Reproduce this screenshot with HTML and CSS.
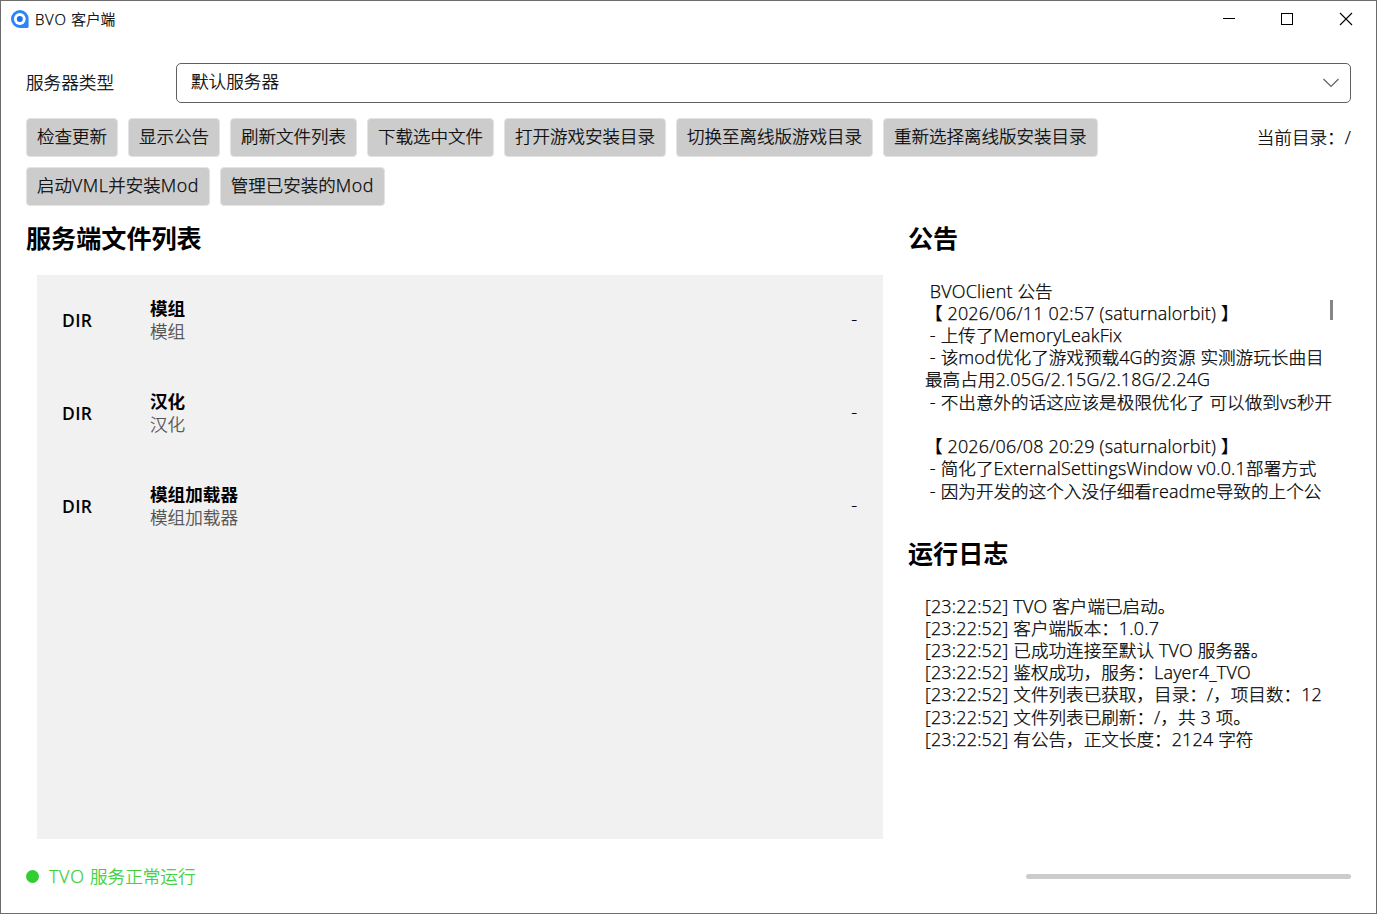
FILE: index.html
```html
<!DOCTYPE html>
<html lang="zh-CN">
<head>
<meta charset="utf-8">
<title>BVO 客户端</title>
<link rel="stylesheet" href="styles.css">
</head>
<body>
<div class="window">
  <header class="titlebar">
    <svg class="logo" width="20" height="20" viewBox="0 0 20 20">
      <path d="M10 1a9 9 0 1 0 0 18h7a1.600 1.600 0 0 0 1.600-1.600V10A8.800 8.800 0 0 0 10 1z" fill="#2e82fa"/>
      <circle cx="9.800" cy="10" r="5.900" fill="#fff"/>
      <circle cx="9.800" cy="10" r="3" fill="#1a70ee"/>
    </svg>
    <span class="caption"><span class="en">BVO </span>客户端</span>
    <div class="controls">
      <svg width="58" height="36" viewBox="0 0 58 36"><path d="M23 17.500h12" stroke="#000"/></svg>
      <svg width="59" height="36" viewBox="0 0 59 36"><rect x="23.500" y="12.500" width="11" height="11" fill="none" stroke="#000"/></svg>
      <svg width="59" height="36" viewBox="0 0 59 36"><path d="M23 12l12 12M35 12L23 24" stroke="#000" stroke-width="1.100"/></svg>
    </div>
  </header>
  <main class="content">
    <div class="server">
      <label>服务器类型</label>
      <div class="select"><span>默认服务器</span>
        <svg width="18" height="10" viewBox="0 0 18 10"><path d="M1.500 1L9 8.500L16.500 1" fill="none" stroke="#606060" stroke-width="1.200"/></svg>
      </div>
    </div>
    <div class="toolbar">
      <div class="buttons">
        <button>检查更新</button><button>显示公告</button><button>刷新文件列表</button><button>下载选中文件</button><button>打开游戏安装目录</button><button>切换至离线版游戏目录</button><button>重新选择离线版安装目录</button>
        <button>启动<span class="en">VML</span>并安装<span class="en">Mod</span></button><button>管理已安装的<span class="en">Mod</span></button>
      </div>
      <div class="cwd">当前目录：<span class="en">/</span></div>
    </div>
    <div class="columns">
      <section class="files">
        <h2>服务端文件列表</h2>
        <div class="list">
          <div class="row"><b class="kind">DIR</b><div class="names"><b>模组</b><span>模组</span></div><span class="size">-</span></div>
          <div class="row"><b class="kind">DIR</b><div class="names"><b>汉化</b><span>汉化</span></div><span class="size">-</span></div>
          <div class="row"><b class="kind">DIR</b><div class="names"><b>模组加载器</b><span>模组加载器</span></div><span class="size">-</span></div>
        </div>
      </section>
      <section class="side">
        <h2>公告</h2>
        <div class="notice">
          <div class="lines">
            <p><span class="en"> BVOClient </span>公告</p>
            <p><i>【</i><span class="en"> 2026/06/11 02:57 (saturnalorbit) </span><i>】</i></p>
            <p><span class="en"> - </span>上传了<span class="en">MemoryLeakFix</span></p>
            <p><span class="en"> - </span>该<span class="en">mod</span>优化了游戏预载<span class="en">4G</span>的资源<span class="en"> </span>实测游玩长曲目</p>
            <p>最高占用<span class="en">2.05G/2.15G/2.18G/2.24G</span></p>
            <p><span class="en"> - </span>不出意外的话这应该是极限优化了<span class="en"> </span>可以做到<span class="en">vs</span>秒开</p>
            <p></p>
            <p><i>【</i><span class="en"> 2026/06/08 20:29 (saturnalorbit) </span><i>】</i></p>
            <p><span class="en"> - </span>简化了<span class="en">ExternalSettingsWindow v0.0.1</span>部署方式</p>
            <p><span class="en"> - </span>因为开发的这个入没仔细看<span class="en">readme</span>导致的上个公</p>
          </div>
          <div class="thumb"></div>
        </div>
        <h2>运行日志</h2>
        <div class="lines log">
          <p><span class="en">[23:22:52] TVO </span>客户端已启动。</p>
          <p><span class="en">[23:22:52] </span>客户端版本：<span class="en">1.0.7</span></p>
          <p><span class="en">[23:22:52] </span>已成功连接至默认<span class="en"> TVO </span>服务器。</p>
          <p><span class="en">[23:22:52] </span>鉴权成功，服务：<span class="en">Layer4_TVO</span></p>
          <p><span class="en">[23:22:52] </span>文件列表已获取，目录：<span class="en">/</span>，项目数：<span class="en">12</span></p>
          <p><span class="en">[23:22:52] </span>文件列表已刷新：<span class="en">/</span>，共<span class="en"> 3 </span>项。</p>
          <p><span class="en">[23:22:52] </span>有公告，正文长度：<span class="en">2124 </span>字符</p>
        </div>
      </section>
    </div>
    <footer class="status">
      <span class="dot"></span><span><span class="en">TVO </span>服务正常运行</span>
      <div class="progress"></div>
    </footer>
  </main>
</div>
</body>
</html>
```
FILE: styles.css
```css
* { box-sizing: border-box; margin: 0; }
body {
  font-family: "Noto Sans CJK SC", sans-serif;
  font-size: 17.6px;
  font-weight: 300;
  line-height: 22.22px;
  color: #000;
  background: #fff;
  -webkit-text-stroke: .25px;
}
.window {
  width: 1377px;
  height: 914px;
  border: 1px solid #6e6c6d;
  display: flex;
  flex-direction: column;
  overflow: hidden;
}
.en {
  font-family: "Open Sans", "Noto Sans", sans-serif;
  font-size: 1.02em;
  font-weight: 300;
  letter-spacing: .2px;
  line-height: 1;
  white-space: pre;
}
.titlebar { height: 37px; flex: none; display: flex; align-items: center; padding: 0 0 1px 9px; }
.caption { font-size: 14.7px; margin-left: 5px; white-space: nowrap; }
.caption .en, .status .en { letter-spacing: .7px; }
button .en { letter-spacing: .5px; }
.controls { display: flex; margin-left: auto; }
.titlebar svg { display: block; }
.content { flex: 1; padding: 25px 25px 0; display: flex; flex-direction: column; }
.server { display: flex; align-items: center; height: 40px; }
.server label { width: 150px; padding-bottom: 2px; }
.select {
  flex: 1;
  height: 40px;
  border: 1px solid #606060;
  border-radius: 5px;
  display: flex;
  align-items: center;
  justify-content: space-between;
  padding: 0 10px 0 14px;
}
.select span { padding-bottom: 4px; }
.toolbar { display: flex; justify-content: space-between; margin-top: 15px; }
.buttons { width: 1090px; display: flex; flex-wrap: wrap; gap: 10px; }
button {
  font: inherit;
  font-size: 17.5px;
  color: inherit;
  height: 39px;
  padding: 0 10px 2px;
  border: 1px solid #e3e3e3;
  border-radius: 4px;
  background: #ccc;
  white-space: nowrap;
}
.cwd { line-height: 37px; white-space: nowrap; }
h2 { font-size: 25.1px; font-weight: 600; line-height: 32px; height: 34px; white-space: nowrap; -webkit-text-stroke: 0; }
.columns { display: flex; margin-top: 15px; height: 618px; }
.files { width: 857px; flex: none; }
.list { margin: 20px 0 0 11px; height: 564px; background: #f1f1f1; padding: 0 25px; }
.row { height: 93px; display: flex; align-items: center; padding-bottom: 2px; }
.row b { font-weight: 600; -webkit-text-stroke: 0; }
.kind { width: 88px; font-family: "Open Sans", sans-serif; font-size: 17.5px; letter-spacing: .3px; }
.names { flex: 1; display: flex; flex-direction: column; padding-bottom: 2px; }
.names span { color: #4a4a4a; }
.size { padding: 0 1px 4px 0; }
.side { width: 443px; margin-left: 25px; }
.lines { white-space: nowrap; }
.lines p { height: 22.22px; white-space: pre; }
.lines i { font-style: normal; }
.notice { display: flex; justify-content: space-between; height: 244px; padding: 24.6px 18px 0 17px; margin-bottom: 37px; }
.notice .lines { width: 405px; }
.thumb { width: 3px; height: 20px; margin-top: 20.4px; background: #868686; flex: none; }
.log { padding: 24.6px 0 0 17px; }
.status { display: flex; align-items: center; height: 24px; margin-top: 25px; color: #32cd32; }
.dot { width: 13px; height: 13px; border-radius: 50%; background: #32cd32; margin-right: 10px; }
.progress { width: 325px; height: 5px; border-radius: 3px; background: #ccc; margin-left: auto; }
```
